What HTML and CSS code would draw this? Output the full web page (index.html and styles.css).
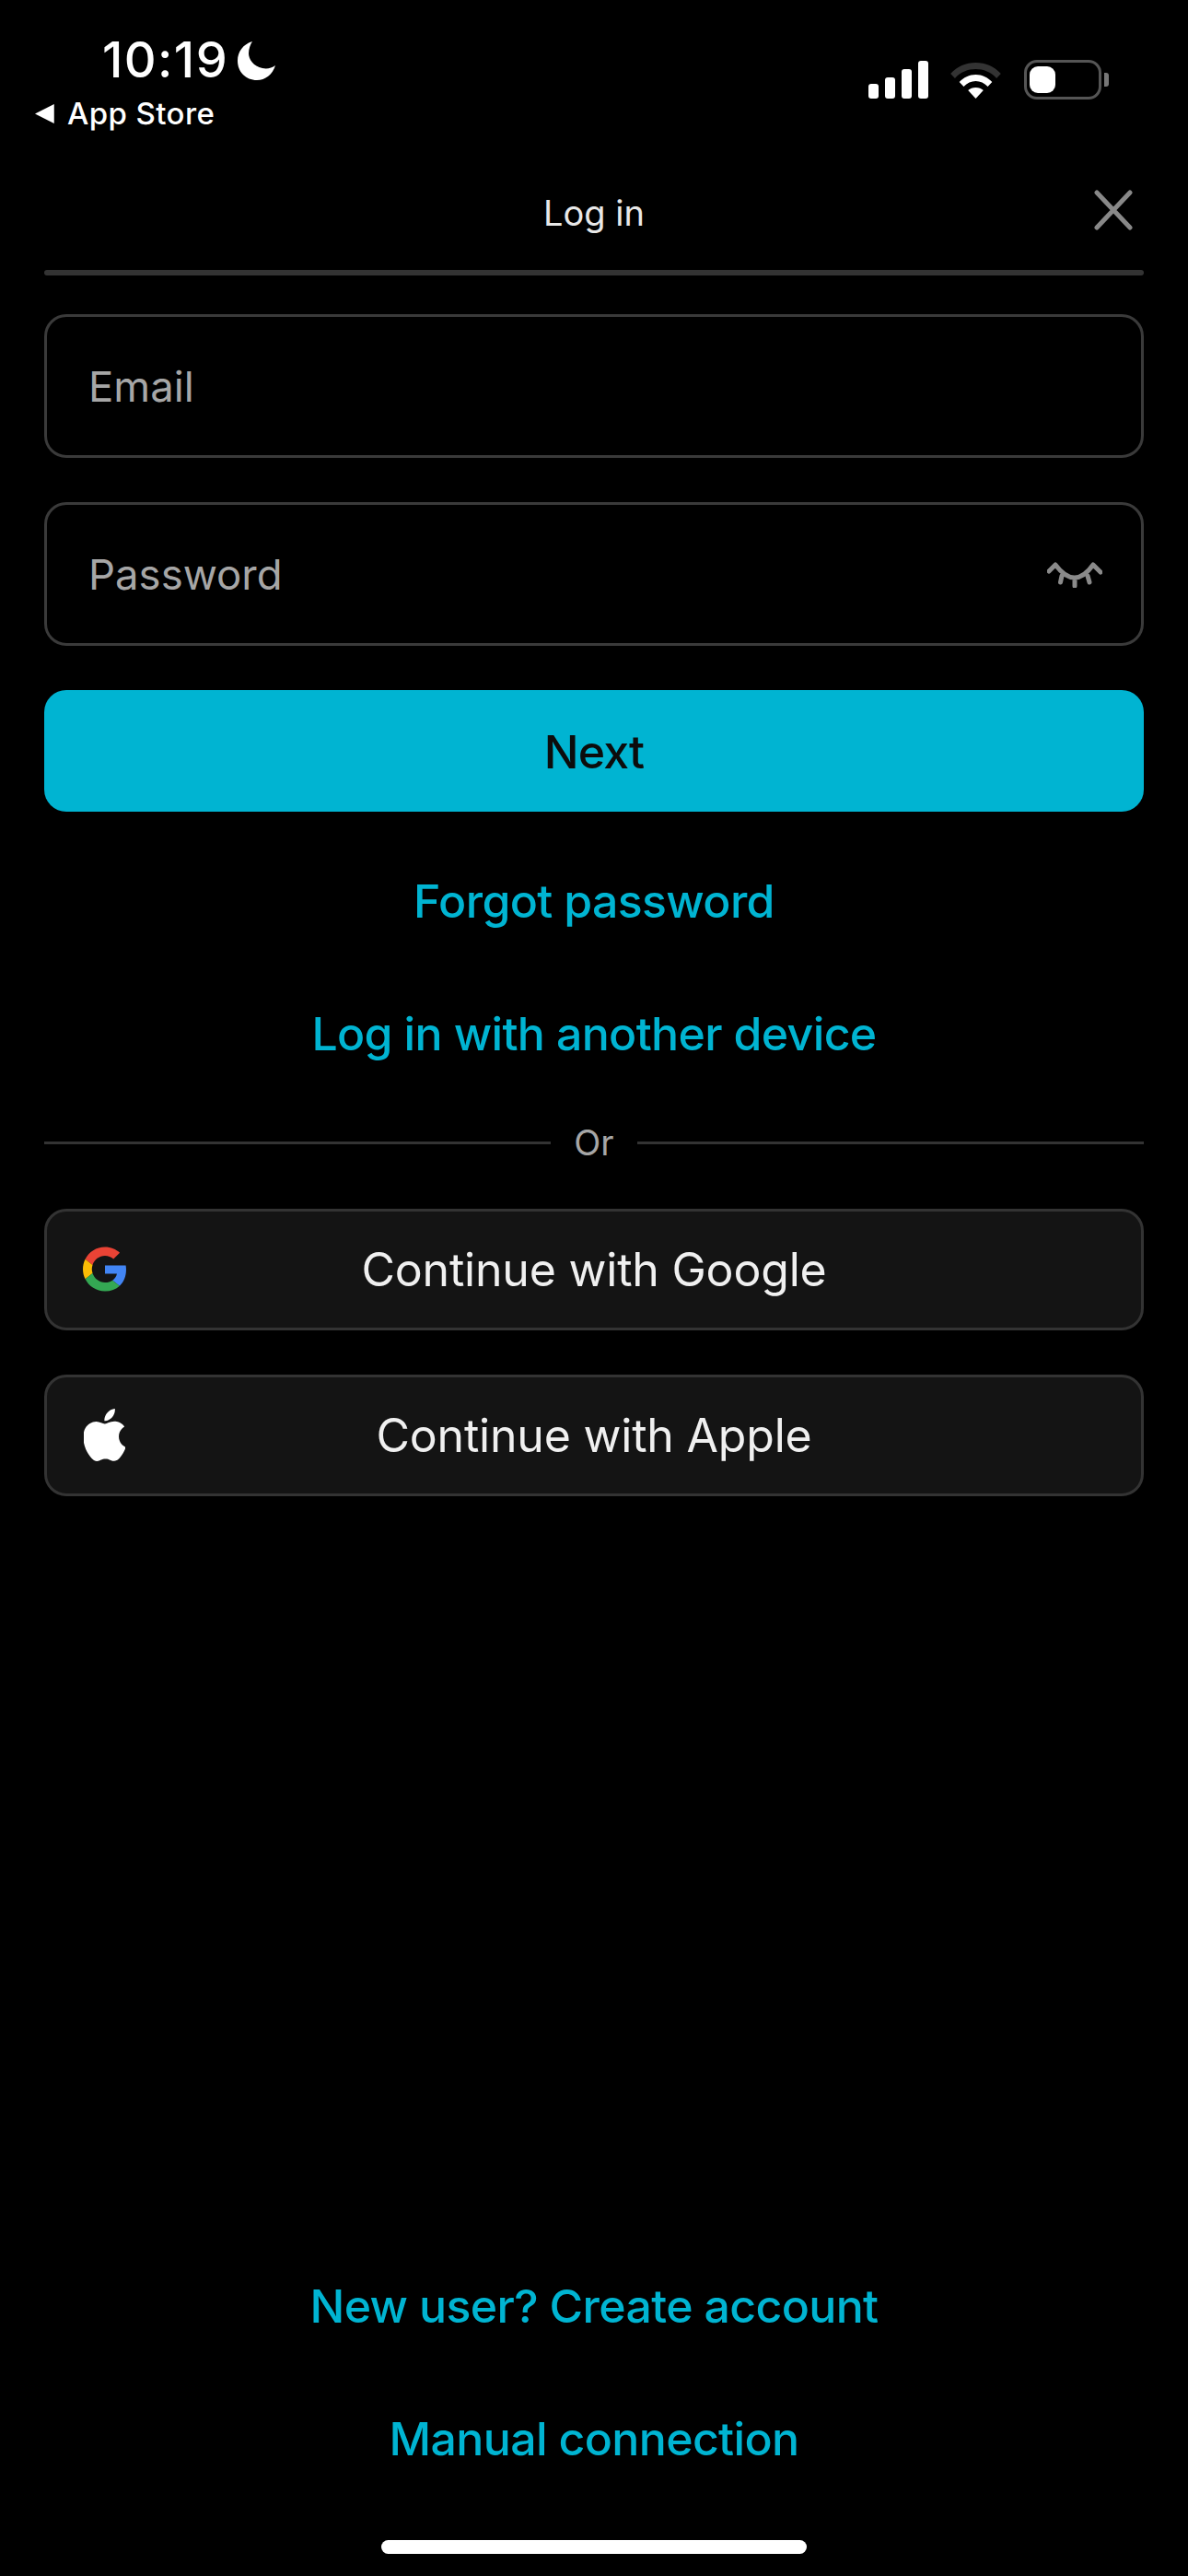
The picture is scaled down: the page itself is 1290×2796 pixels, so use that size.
FILE: index.html
```html
<!DOCTYPE html>
<html lang="en">
<head>
<meta charset="utf-8">
<title>Log in</title>
<link rel="stylesheet" href="styles.css">
</head>
<body>
<div class="screen">
  <header class="status">
    <div class="status-left">
      <div class="clock"><span class="time">10:19</span>
        <svg class="moon" viewBox="0 0 41 42"><path d="M16 0C6 3 0 11 0 21c0 12 9 21 21 21 9 0 17-6 20-16-4 3-9 4-14 3C17 27 12 19 12 13c0-5 2-10 4-13z" fill="#fff"/></svg>
      </div>
      <div class="back"><svg class="back-arrow" viewBox="0 0 18 20" preserveAspectRatio="none"><path d="M0 10 17 0v20z" fill="#fff"/></svg><span>App Store</span></div>
    </div>
    <div class="status-right">
      <div class="signal"><i class="bar b1"></i><i class="bar b2"></i><i class="bar b3"></i><i class="bar b4"></i></div>
      <svg class="wifi" viewBox="0 0 48 42" preserveAspectRatio="none">
        <path d="M1 15C7 7 15 3 24 3s17 4 23 12l-4 5C38 13 31 10 24 10S10 13 5 20z" fill="#333"/>
        <path d="M9 24c4-5 9-8 15-8s11 3 15 8l-4 5c-3-4-7-6-11-6s-8 2-11 6z" fill="#fff"/>
        <path d="M17 33c2-2 4-3 7-3s5 1 7 3l-7 9z" fill="#fff"/>
      </svg>
      <div class="battery"><div class="battery-body"><div class="battery-fill"></div></div><div class="battery-tip"></div></div>
    </div>
  </header>

  <main class="content">
    <div class="title-row">
      <h1 class="title">Log in</h1>
      <svg class="close" viewBox="0 0 42 44" preserveAspectRatio="none"><path d="M3 3l36 38M39 3 3 41" stroke="#888" stroke-width="5" stroke-linecap="round" fill="none"/></svg>
    </div>
    <div class="rule"></div>

    <div class="field">Email</div>
    <div class="field">Password
      <svg class="eye" viewBox="0 0 60 28"><path d="M2 10l7-7Q30 31 50 3l8 8M16 15l-1.5 7M30 17v9M44 15l2 7" stroke="#8a8a8a" stroke-width="5" stroke-linecap="round" stroke-linejoin="round" fill="none"/></svg>
    </div>

    <button class="next">Next</button>

    <a class="link forgot">Forgot password</a>
    <a class="link another">Log in with another device</a>

    <div class="or"><span class="or-line"></span><span class="or-text">Or</span><span class="or-line"></span></div>

    <button class="social">
      <svg class="social-icon google" viewBox="0 0 48 48">
        <path fill="#EA4335" d="M24 9.5c3.54 0 6.71 1.22 9.21 3.6l6.85-6.85C35.9 2.38 30.47 0 24 0 14.62 0 6.51 5.38 2.56 13.22l7.98 6.19C12.43 13.72 17.74 9.5 24 9.5z"/>
        <path fill="#4285F4" d="M46.98 24.55c0-1.57-.15-3.09-.38-4.55H24v9.02h12.94c-.58 2.96-2.26 5.48-4.78 7.18l7.73 6c4.51-4.18 7.09-10.36 7.09-17.65z"/>
        <path fill="#FBBC05" d="M10.53 28.59c-.48-1.45-.76-2.99-.76-4.59s.27-3.14.76-4.59l-7.98-6.19C.92 16.46 0 20.12 0 24c0 3.88.92 7.54 2.56 10.78l7.97-6.19z"/>
        <path fill="#34A853" d="M24 48c6.48 0 11.93-2.13 15.89-5.81l-7.73-6c-2.15 1.45-4.92 2.3-8.16 2.3-6.26 0-11.57-4.22-13.47-9.91l-7.98 6.19C6.51 42.62 14.62 48 24 48z"/>
      </svg>
      Continue with Google
    </button>
    <button class="social">
      <svg class="social-icon apple" viewBox="2.5 0 19 24"><path fill="#fff" d="M12.152 6.896c-.948 0-2.415-1.078-3.96-1.04-2.04.027-3.91 1.183-4.961 3.014-2.117 3.675-.546 9.103 1.519 12.09 1.013 1.454 2.208 3.09 3.792 3.039 1.52-.065 2.09-.987 3.935-.987 1.831 0 2.35.987 3.96.948 1.637-.026 2.676-1.48 3.676-2.948 1.156-1.688 1.636-3.325 1.662-3.415-.039-.013-3.182-1.221-3.22-4.857-.026-3.04 2.48-4.494 2.597-4.559-1.429-2.09-3.623-2.324-4.39-2.376-2-.156-3.675 1.09-4.61 1.09zM15.53 3.83c.843-1.012 1.4-2.427 1.245-3.83-1.207.052-2.662.805-3.532 1.818-.78.896-1.454 2.338-1.273 3.714 1.338.104 2.715-.688 3.559-1.701"/></svg>
      Continue with Apple
    </button>

    <div class="spacer"></div>

    <a class="link create">New user? Create account</a>
    <a class="link manual">Manual connection</a>
  </main>

  <div class="home"><div class="home-bar"></div></div>
</div>
</body>
</html>
```
FILE: styles.css
```css
* { box-sizing: border-box; }
html, body { margin: 0; padding: 0; background: #000; }
body { font-family: Inter, "Liberation Sans", sans-serif; color: #fff; }
.screen { width: 1290px; height: 2796px; display: flex; flex-direction: column; background: #000; overflow: hidden; }

.status { display: flex; justify-content: space-between; height: 190px; flex: none; }
.status-left { display: flex; flex-direction: column; padding: 36px 0 0 38px; }
.clock { display: flex; align-items: center; gap: 10px; padding-left: 73px; height: 58px; }
.time { font-size: 54px; font-weight: 500; line-height: 58px; letter-spacing: 1.4px; }
.moon { width: 41px; height: 42px; margin-top: 2px; }
.back { display: flex; align-items: center; gap: 13px; margin-top: 8px; height: 42px; font-size: 33px; font-weight: 500; line-height: 42px; letter-spacing: .4px; }
.back-arrow { width: 22px; height: 21px; }
.status-right { display: flex; align-items: flex-start; padding: 65px 86px 0 0; }
.signal { display: flex; align-items: flex-end; gap: 7px; height: 42px; margin-right: 23px; }
.bar { display: block; width: 11px; background: #fff; border-radius: 3px; }
.b1 { height: 16px; } .b2 { height: 23px; } .b3 { height: 32px; } .b4 { height: 41px; }
.wifi { width: 57px; height: 42px; margin-right: 24px; }
.battery { display: flex; align-items: center; height: 43px; }
.battery-body { width: 84px; height: 43px; border: 3.5px solid #555; border-radius: 14px; padding: 3.5px 2.5px; }
.battery-fill { width: 28px; height: 29px; background: #fff; border-radius: 9px; }
.battery-tip { width: 5px; height: 15px; margin-left: 3px; background: #777; border-radius: 0 3px 3px 0; }

.content { flex: 1; display: flex; flex-direction: column; padding: 0 48px; }
.title-row { display: grid; grid-template-columns: 1fr auto 1fr; align-items: center; height: 82px; }
.title { grid-column: 2; margin: 0; font-size: 38px; font-weight: 400; line-height: 82px; color: #e8e8e8; }
.close { grid-column: 3; justify-self: end; width: 42px; height: 44px; margin-right: 12px; margin-top: -6px; }
.rule { height: 6px; margin-top: 21px; background: #333; border-radius: 3px; }

.field { position: relative; display: flex; align-items: center; height: 156px; margin-top: 42px; padding: 0 45px; border: 3px solid #3a3a3a; border-radius: 24px; font-size: 45.5px; color: #a6a6a6; }
.field + .field { margin-top: 48px; }
.eye { position: absolute; right: 42px; top: 62px; width: 60px; height: 28px; }

.next { display: block; height: 132px; margin-top: 48px; padding: 2px 0 0; border: 0; border-radius: 24px; background: #00b4d2; color: #0c0c0c; font-family: inherit; font-size: 50px; font-weight: 500; letter-spacing: -.8px; }

.link { display: block; text-align: center; font-size: 50px; font-weight: 500; line-height: 64px; letter-spacing: -.65px; color: #00b4d2; }
.forgot { margin-top: 65px; }
.another { margin-top: 80px; }

.or { display: flex; align-items: center; gap: 25px; height: 50px; margin: 61px 0 -1px; }
.or-line { flex: 1; height: 3px; background: #333; }
.or-text { font-size: 38px; line-height: 50px; color: #a6a6a6; }

.social { position: relative; display: block; width: 100%; height: 132px; margin-top: 48px; background: #141414; border: 3px solid #333; border-radius: 24px; color: #f0f0f0; font-family: inherit; font-size: 50px; font-weight: 400; letter-spacing: -.2px; }
.social-icon { position: absolute; left: 39px; }
.google { top: 38px; width: 48px; height: 49px; }
.apple { top: 34px; left: 40px; width: 45px; height: 57px; }

.spacer { flex: 1; }
.create { margin-bottom: 80px; }

.home { flex: none; height: 117px; padding-top: 78px; display: flex; justify-content: center; }
.home-bar { width: 462px; height: 15px; background: #fff; border-radius: 7.5px; }
```
